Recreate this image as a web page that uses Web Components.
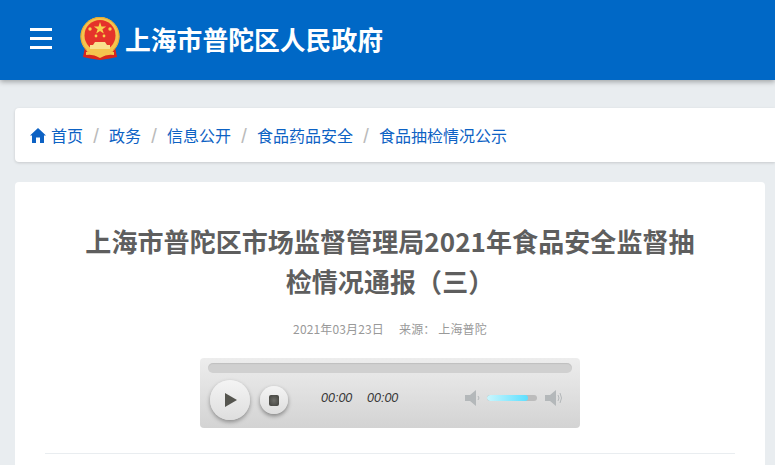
<!DOCTYPE html>
<html lang="zh">
<head>
<meta charset="utf-8">
<title>上海市普陀区人民政府</title>
<style>
  html, body { margin: 0; padding: 0; height: 465px; overflow: hidden; }
  body {
    background: #e9edf0;
    font-family: "Liberation Sans", "Noto Sans CJK SC", sans-serif;
    display: flex;
    flex-direction: column;
  }
</style>
</head>
<body>
<site-header>上海市普陀区人民政府</site-header>
<bread-crumb>
  <a slot="item">首页</a>
  <a slot="item">政务</a>
  <a slot="item">信息公开</a>
  <a slot="item">食品药品安全</a>
  <a slot="item">食品抽检情况公示</a>
</bread-crumb>
<article-card>
  <span slot="title">上海市普陀区市场监督管理局2021年食品安全监督抽检情况通报（三）</span>
  <span slot="date">2021年03月23日</span>
  <span slot="source">来源： 上海普陀</span>
  <audio-bar></audio-bar>
</article-card>

<script>
class SiteHeader extends HTMLElement {
  constructor() {
    super();
    this.attachShadow({ mode: 'open' });
    this.shadowRoot.innerHTML = `
      <style>
        :host {
          display: flex;
          align-items: center;
          flex: none;
          height: 80px;
          padding: 0 0 3px 30px;
          box-sizing: border-box;
          background: #0068c6;
          box-shadow: 0 2px 5px rgba(0, 0, 0, .3);
          position: relative;
          color: #fff;
        }
        .menu { display: flex; flex-direction: column; gap: 6px; width: 22px; margin-right: 28px; }
        .menu i { display: block; height: 3px; background: #fff; }
        svg { display: block; flex: none; margin: 0 5px 0 0; }
        .name { font: 700 25.8px/1 "Noto Sans CJK SC", sans-serif; white-space: nowrap; }
      </style>
      <div class="menu"><i></i><i></i><i></i></div>
      <svg width="40" height="43" viewBox="0 0 40 43">
        <path d="M5 30 L3 40 L10 41.5 L20 43 L30 41.5 L37 40 L35 30 Z" fill="#d8261c"/>
        <circle cx="20" cy="19.5" r="19.5" fill="#f4c44e"/>
        <circle cx="20" cy="19.5" r="19" fill="none" stroke="#e6a82f" stroke-width="1"/>
        <circle cx="20" cy="18.5" r="15.5" fill="#e5332a"/>
        <polygon points="20,5 21.5,9.4 26.2,9.4 22.4,12.2 23.8,16.6 20,14 16.2,16.6 17.6,12.2 13.8,9.4 18.5,9.4" fill="#f7d24c"/>
        <circle cx="10" cy="12" r="1.7" fill="#f7d24c"/>
        <circle cx="30" cy="12" r="1.7" fill="#f7d24c"/>
        <circle cx="16" cy="19" r="1.4" fill="#f7d24c"/>
        <circle cx="24" cy="19" r="1.4" fill="#f7d24c"/>
        <path d="M15 25 L25 25 L27 28 L30 28 L30 32 L10 32 L10 28 L13 28 Z" fill="#f9e08e"/>
        <rect x="7" y="32" width="26" height="2.5" fill="#f4c44e"/>
        <path d="M6 35 Q13 33 20 38 Q27 33 34 35 L34 38 Q27 36.5 20 41 Q13 36.5 6 38 Z" fill="#f4c44e"/>
      </svg>
      <div class="name"><slot></slot></div>
    `;
  }
}

class BreadCrumb extends HTMLElement {
  constructor() {
    super();
    this.attachShadow({ mode: 'open' });
    this.shadowRoot.innerHTML = `
      <style>
        :host {
          display: block;
          flex: none;
          height: 54px;
          margin: 28px 0 20px 15px;
          background: #fff;
          border-radius: 4px 0 0 4px;
          box-shadow: 0 1px 3px rgba(0, 0, 0, .15);
          font: 400 16px/54px "Noto Sans CJK SC", sans-serif;
          color: #0d62c4;
        }
        nav { display: flex; align-items: center; height: 54px; padding-left: 15px; white-space: nowrap; }
        svg { flex: none; margin-right: 5px; }
        .sep { color: #bbb; width: 26px; text-align: center; font-family: "Liberation Sans", sans-serif; font-size: 20px; position: relative; top: 1px; }
      </style>
      <nav></nav>
    `;
  }

  connectedCallback() {
    const nav = this.shadowRoot.querySelector('nav');
    const items = [...this.querySelectorAll('a')];
    let html = `<svg width="16" height="15" viewBox="0 0 16 15"><path d="M8 0 L16 7.5 L14 7.5 L14 15 L10 15 L10 9.5 L6 9.5 L6 15 L2 15 L2 7.5 L0 7.5 Z" fill="#0d62c4"/></svg>`;
    items.forEach((a, i) => {
      if (i > 0) html += `<span class="sep">/</span>`;
      html += `<span>${a.textContent}</span>`;
    });
    nav.innerHTML = html;
  }
}

class ArticleCard extends HTMLElement {
  constructor() {
    super();
    this.attachShadow({ mode: 'open' });
    this.shadowRoot.innerHTML = `
      <style>
        :host {
          display: block;
          flex: none;
          height: 300px;
          width: 750px;
          margin-left: 15px;
          box-sizing: border-box;
          padding: 39px 30px 0;
          background: #fff;
          border-radius: 4px;
        }
        h1 {
          margin: 0;
          padding: 0 30px;
          text-align: center;
          font: 700 26px/40px "Noto Sans CJK SC", sans-serif;
          letter-spacing: .08px;
          color: #5e5e5e;
        }
        .meta {
          display: flex;
          justify-content: center;
          gap: 15px;
          margin-top: 18px;
          font: 400 12px/20px "Noto Sans CJK SC", sans-serif;
          letter-spacing: .15px;
          color: #999;
        }
        .player { display: flex; justify-content: center; margin-top: 19px; }
        hr { margin: 25px 0 0; border: 0; border-top: 1px solid #e9edf0; }
      </style>
      <h1><slot name="title"></slot></h1>
      <div class="meta"><slot name="date"></slot><slot name="source"></slot></div>
      <div class="player"><slot></slot></div>
      <hr>
    `;
  }
}

class AudioBar extends HTMLElement {
  constructor() {
    super();
    this.attachShadow({ mode: 'open' });
    this.shadowRoot.innerHTML = `
      <style>
        :host {
          display: flex;
          flex-direction: column;
          width: 380px;
          height: 70px;
          box-sizing: border-box;
          padding: 5px 8px 0;
          border-radius: 4px;
          background: linear-gradient(#ededed, #d3d3d3);
        }
        .track {
          height: 10px;
          border-radius: 5px;
          background: #d0d0d0;
          box-shadow: inset 0 1px 1px rgba(0, 0, 0, .08);
        }
        .controls { display: flex; align-items: center; margin-top: 7px; height: 40px; }
        .play, .stop {
          display: flex;
          align-items: center;
          justify-content: center;
          flex: none;
          border-radius: 50%;
          background: linear-gradient(#f4f4f4, #dedede);
        }
        .play { width: 40px; height: 40px; margin-left: 2px; box-shadow: 0 2px 4px rgba(0, 0, 0, .35); }
        .play svg { margin-left: 2px; }
        .stop { width: 28px; height: 28px; margin-left: 10px; box-shadow: 0 2px 4px rgba(0, 0, 0, .4); }
        .stop i { display: block; width: 10px; height: 11px; border-radius: 2px; background: radial-gradient(#6f6f6a, #3f3f3b); }
        .time { font: italic 400 12.5px/1 "Liberation Sans", sans-serif; color: #333; width: 46px; flex: none; margin-bottom: 4px; }
        .time.first { margin-left: 33px; }
        .volume { display: flex; align-items: center; margin: 0 0 5px 52px; }
        .slider { width: 50px; height: 6px; margin: 0 8px 0 6px; border-radius: 3px; background: #bcbcbc; overflow: hidden; }
        .slider i { display: block; width: 41px; height: 6px; background: linear-gradient(90deg, #caf6fd, #5cdfff); border-radius: 3px; }
      </style>
      <div class="track"></div>
      <div class="controls">
        <div class="play">
          <svg width="14" height="16" viewBox="0 0 14 16"><polygon points="1,1 13,8 1,15" fill="#55554f"/></svg>
        </div>
        <div class="stop"><i></i></div>
        <span class="time first">00:00</span>
        <span class="time">00:00</span>
        <div class="volume">
          <svg width="16" height="16" viewBox="0 0 16 16">
            <path d="M0 5 H5 L11 0 V16 L5 11 H0 Z" fill="#b4b8ba"/>
            <path d="M13 6 Q15 8 13 10" fill="none" stroke="#b4b8ba"/>
          </svg>
          <div class="slider"><i></i></div>
          <svg width="19" height="16" viewBox="0 0 19 16">
            <path d="M0 5 H5 L11 0 V16 L5 11 H0 Z" fill="#b4b8ba"/>
            <path d="M13 5 Q15 8 13 11 M15 3 Q18 8 15 13" fill="none" stroke="#b4b8ba"/>
          </svg>
        </div>
      </div>
    `;
  }
}

customElements.define('site-header', SiteHeader);
customElements.define('bread-crumb', BreadCrumb);
customElements.define('article-card', ArticleCard);
customElements.define('audio-bar', AudioBar);
</script>
</body>
</html>
